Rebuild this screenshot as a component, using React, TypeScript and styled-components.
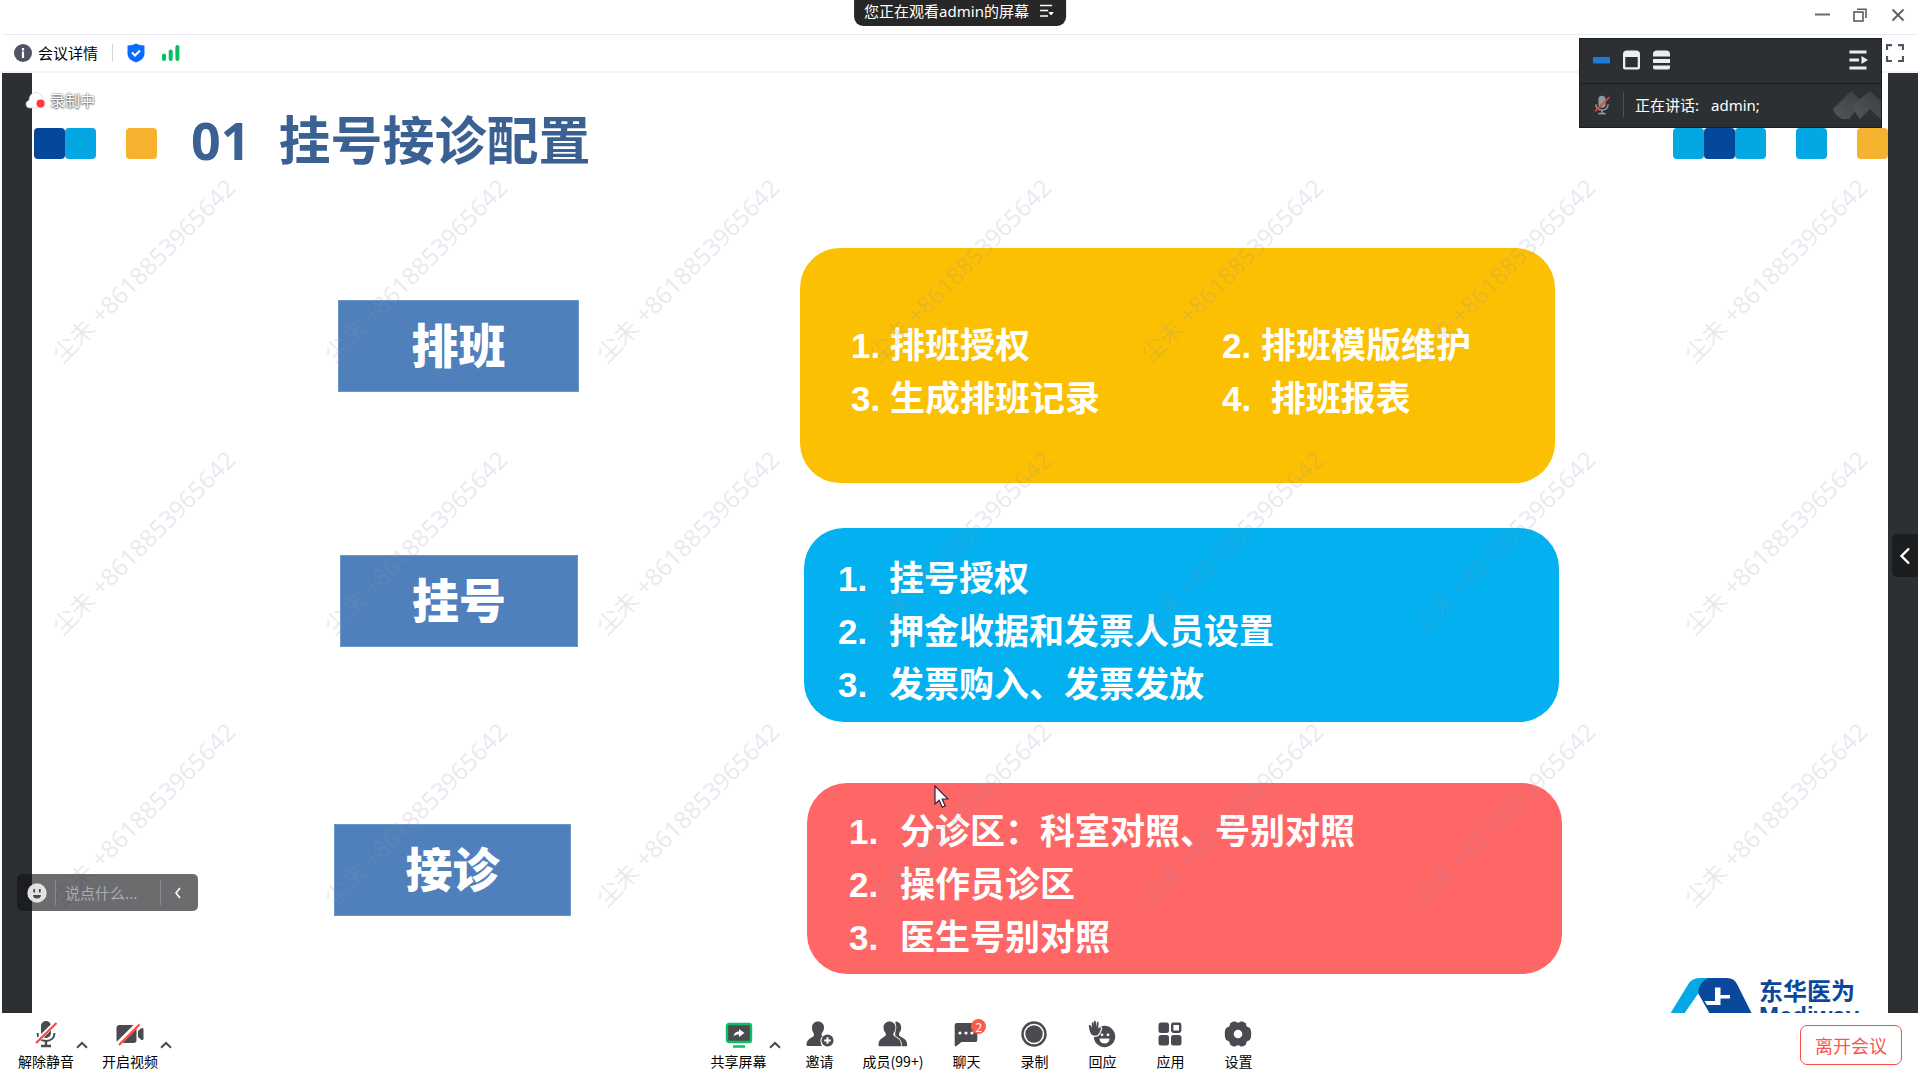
import React from "react";
import styled, { createGlobalStyle, css } from "styled-components";

const uiFont = `"Noto Sans", "Noto Sans CJK SC", sans-serif`;
const cjkFont = `"Noto Sans CJK SC", "Noto Sans", sans-serif`;

const GlobalStyle = createGlobalStyle`
  * { box-sizing: border-box; }
  body { margin: 0; background: #fff; font-family: ${uiFont}; }
  button, input { font: inherit; color: inherit; border: 0; background: none; padding: 0; margin: 0; }
  button { cursor: pointer; }
  h1, p, ol { margin: 0; padding: 0; }
  ol { list-style: none; }
  svg { display: block; flex: none; }
`;

const Window = styled.main`
  position: relative;
  display: flex;
  flex-direction: column;
  height: 100vh;
  padding: 0 2px;
  overflow: hidden;
  background: #fff;
`;

const TitleBar = styled.header`
  display: flex;
  align-items: center;
  justify-content: flex-end;
  gap: 24px;
  height: 35px;
  padding: 0 13px 5px;
  border-bottom: 1px solid #e9eaf4;
`;

const WindowButton = styled.button`
  display: flex;
  align-items: center;
  justify-content: center;
  width: 14px;
  height: 20px;
`;

const SharePill = styled.button`
  position: absolute;
  top: 0;
  left: 50%;
  transform: translateX(-50%);
  display: flex;
  align-items: center;
  gap: 10px;
  height: 26px;
  padding: 0 12px 4px 10px;
  border-radius: 0 0 9px 9px;
  background: #272727;
  color: #fff;
  font-size: 15px;
  line-height: 18px;
  white-space: nowrap;
`;

const InfoBar = styled.div`
  display: flex;
  align-items: center;
  height: 38px;
  padding: 0 16px 1px 12px;
  border-bottom: 2px solid #f1f2fa;
`;

const DetailsButton = styled.button`
  display: flex;
  align-items: center;
  gap: 6px;
  font-family: ${cjkFont};
  font-size: 15px;
  line-height: 20px;
  color: #000;
`;

const Rule = styled.span<{ $color: string; $height: number }>`
  flex: none;
  width: 1px;
  height: ${(p) => p.$height}px;
  background: ${(p) => p.$color};
`;

const StatusIcons = styled.div`
  display: flex;
  align-items: center;
  gap: 17px;
`;

const InfoLeft = styled.div`
  display: flex;
  align-items: center;
  flex: 1;
  gap: 14px;
`;

const Stage = styled.section`
  position: relative;
  flex: 1;
  min-height: 0;
  display: flex;
  padding: 0 30px;
  overflow: hidden;
  background: #2c3033;
`;

const Slide = styled.article`
  position: relative;
  flex: 1;
  display: flex;
  flex-direction: column;
  overflow: hidden;
  background: #fff;
`;

const SlideHeader = styled.div`
  display: flex;
  align-items: center;
  height: 141px;
  padding-left: 2px;
`;

const Blocks = styled.div`
  display: flex;
`;

const Block = styled.span<{ $color: string; $gap?: boolean }>`
  width: 31px;
  height: 31px;
  margin-left: ${(p) => (p.$gap ? 30 : 0)}px;
  border-radius: 4px;
  background: ${(p) => p.$color};
`;

const SlideTitle = styled.h1`
  display: flex;
  flex: 1;
  gap: 28px;
  padding: 0 0 8px 34px;
  font-family: ${uiFont};
  font-size: 52px;
  line-height: 60px;
  font-weight: 700;
  color: #3b6193;
`;

const Rows = styled.div`
  display: flex;
  flex-direction: column;
  padding-top: 34px;
`;

const Row = styled.div<{ $indent: number; $gap: number; $after: number }>`
  display: flex;
  align-items: flex-start;
  gap: ${(p) => p.$gap}px;
  padding-left: ${(p) => p.$indent}px;
  margin-bottom: ${(p) => p.$after}px;
`;

const LabelBox = styled.div<{ $width: number; $top: number }>`
  display: flex;
  align-items: center;
  justify-content: center;
  width: ${(p) => p.$width}px;
  height: 92px;
  margin-top: ${(p) => p.$top}px;
  padding-bottom: 6px;
  border: 1px solid #6b97c6;
  background: #5080bc;
  color: #fff;
  font-family: ${cjkFont};
  font-size: 47px;
  line-height: 64px;
  font-weight: 900;
`;

const Card = styled.div<{ $color: string; $height: number; $inset: number }>`
  display: flex;
  align-items: center;
  width: 755px;
  height: ${(p) => p.$height}px;
  padding: 12px 80px 0 ${(p) => p.$inset}px;
  border-radius: 40px;
  background: ${(p) => p.$color};
  color: #fff;
  font-family: "Liberation Sans", "Noto Sans CJK SC", sans-serif;
  font-size: 35px;
  line-height: 53px;
  font-weight: 700;
`;

const PairList = styled.ol`
  display: grid;
  grid-template-columns: 371px auto;
  & > li { white-space: pre; }
`;

const NumberedList = styled.ol`
  & > li { display: flex; }
`;

const ItemNumber = styled.span`
  width: 51px;
`;

const BrandLogo = styled.div`
  position: absolute;
  right: 29px;
  top: 903px;
  display: flex;
  gap: 7px;
  color: #0b479a;
`;

const BrandName = styled.div`
  font-family: ${cjkFont};
  font-size: 24px;
  line-height: 28px;
  font-weight: 700;
`;

const BrandLatin = styled.div`
  font-family: "Liberation Sans", sans-serif;
  font-size: 24px;
  line-height: 24px;
  font-weight: 700;
`;

const Watermarks = styled.div`
  position: absolute;
  top: 60px;
  left: 4px;
  width: 1904px;
  display: grid;
  grid-template-columns: repeat(7, 272px);
  grid-auto-rows: 272px;
  pointer-events: none;
`;

const Watermark = styled.span`
  display: flex;
  align-items: center;
  justify-content: center;
  transform: rotate(-45deg);
  white-space: nowrap;
  font-size: 24px;
  font-weight: 400;
  color: rgba(140, 148, 172, 0.2);
`;

const Recording = styled.div`
  position: absolute;
  top: 17px;
  left: 23px;
  display: flex;
  align-items: center;
  gap: 4px;
  height: 20px;
  color: #fff;
  font-family: ${cjkFont};
  font-size: 15px;
  line-height: 20px;
  text-shadow: 0 0 2px #444, 0 1px 2px #666;
`;

const ChatBar = styled.form`
  position: absolute;
  left: 15px;
  bottom: 102px;
  display: flex;
  align-items: center;
  width: 181px;
  height: 37px;
  padding-left: 10px;
  border-radius: 5px;
  background: rgba(18, 18, 22, 0.62);
  color: #fff;
`;

const EmojiButton = styled.button`
  margin-right: 8px;
`;

const ChatInput = styled.input`
  flex: 1;
  min-width: 0;
  padding-left: 9px;
  font-family: ${cjkFont};
  font-size: 15px;
  line-height: 20px;
  outline: 0;
  &::placeholder { color: #a9acb8; opacity: 1; }
`;

const CollapseButton = styled.button`
  display: flex;
  align-items: center;
  width: 37px;
  height: 37px;
  padding-left: 13px;
`;

const SideHandle = styled.button`
  position: absolute;
  right: 0;
  top: 461px;
  display: flex;
  align-items: center;
  justify-content: center;
  width: 26px;
  height: 43px;
  border-radius: 5px 0 0 5px;
  background: #1b1d1f;
`;

const Pointer = styled.svg`
  position: absolute;
  left: 931px;
  top: 712px;
`;

const SpeakerPanel = styled.aside`
  position: absolute;
  top: 38px;
  right: 38px;
  width: 303px;
  height: 90px;
  border: 1px solid #1c1f21;
  background: #2c3033;
  color: #fff;
  font-size: 15px;
  line-height: 20px;
`;

const PanelTop = styled.div`
  display: flex;
  align-items: center;
  gap: 13px;
  height: 45px;
  padding: 0 13px 2px;
  border-bottom: 1px solid #1c1f21;
  & > :last-child { margin-left: auto; }
`;

const PanelBottom = styled.div`
  display: flex;
  align-items: center;
  gap: 11px;
  height: 43px;
  padding: 0 0 2px 12px;
`;

const Speaking = styled.p`
  display: flex;
  flex: 1;
  gap: 12px;
`;

const BottomBar = styled.footer`
  display: flex;
  justify-content: space-between;
  height: 67px;
  padding: 0 16px 0 10px;
`;

const ToolGroup = styled.div`
  display: flex;
  gap: 6px;
`;

const toolText = css`
  font-family: ${cjkFont};
  font-size: 14px;
  line-height: 20px;
`;

const Tool = styled.button<{ $tight?: boolean }>`
  position: relative;
  display: flex;
  flex-direction: column;
  align-items: center;
  min-width: 62px;
  padding: ${(p) => (p.$tight ? "7px 2px 0 6px" : "7px 6px 0")};
  ${toolText}
  color: #000;
  & > svg { margin-bottom: 3px; }
`;

const Caret = styled.button`
  align-self: flex-start;
  width: 14px;
  padding-top: 28px;
`;

const Split = styled.div`
  display: flex;
`;

const Badge = styled.span`
  position: absolute;
  top: 6px;
  right: 11px;
  width: 15px;
  height: 15px;
  border-radius: 50%;
  background: #fc5b4b;
  color: #fff;
  font-size: 12px;
  line-height: 15px;
  text-align: center;
`;

const LeaveButton = styled.button`
  align-self: flex-start;
  width: 102px;
  height: 40px;
  margin-top: 12px;
  border: 1px solid #fa4b45;
  border-radius: 7px;
  color: #fa5751;
  font-family: ${cjkFont};
  font-size: 18px;
  line-height: 24px;
`;

const INK = "#494b50";

const CaretIcon = () => (
  <svg width="12" height="8" viewBox="0 0 12 8" fill="none" stroke={INK} strokeWidth="2">
    <path d="M1 6.8 6 2l5 4.8" />
  </svg>
);

const MicMuted = ({ body = INK, slash = "#fa4640", size = 28 }) => (
  <svg width={size} height={size} viewBox="0 0 28 28" fill="none">
    <rect x="9" y="1" width="10" height="17" rx="5" fill={body} />
    <path d="M5.5 13c0 5 3.500 8 8.500 8s8.500-3 8.500-8" stroke={body} strokeWidth="2" />
    <path d="M14 21v4M9 26h10" stroke={body} strokeWidth="2.400" />
    <path d="M3.500 22.500 24 2.500" stroke="#fff" strokeOpacity={body === INK ? 1 : 0} strokeWidth="4.500" />
    <path d="M4 23 24.500 3" stroke={slash} strokeWidth="2.200" />
  </svg>
);

const CameraOff = () => (
  <svg width="28" height="28" viewBox="0 0 28 28" fill="none">
    <rect x="0.500" y="5" width="20" height="18" rx="3" fill={INK} />
    <path d="M22 11l3-2.500c1.500-1 2.500-.5 2.500 1v9c0 1.500-1 2-2.500 1L22 17z" fill={INK} />
    <path d="M2 24 22.500 3.500" stroke="#fff" strokeWidth="5" />
    <path d="M3 25 23.500 4.500" stroke="#fa4640" strokeWidth="2.200" />
  </svg>
);

const ShareScreen = () => (
  <svg width="28" height="28" viewBox="0 0 28 28">
    <rect x="2" y="4" width="24" height="18" rx="2" fill={INK} stroke="#0cbf66" strokeWidth="2.400" />
    <path d="M8.500 16.500c.5-3.500 2.500-5 5.500-5V9l5.500 4-5.500 4v-2.500c-2.500 0-4 .5-5.500 2z" fill="#fff" />
    <path d="M8 26.500h12" stroke="#0cbf66" strokeWidth="2.500" />
  </svg>
);

const Invite = () => (
  <svg width="28" height="28" viewBox="0 0 28 28">
    <path d="M12 1.500c3.500 0 6 2.500 6 6 0 2.500-1 4-2 5.500-.8 1.200-.5 2.500.5 3-1.500 1.500-2 3-2 5 0 1.800.5 3.500 1.500 5H1.500c-.8 0-1-.5-1-1.200C.500 20 4 18.500 6.500 17c1.500-.8 2-2.500 1-4C6.500 11.500 6 10 6 7.500c0-3.500 2.500-6 6-6z" fill={INK} />
    <circle cx="21.500" cy="20.500" r="6" fill={INK} />
    <path d="M21.500 17.200v6.600M18.200 20.500h6.600" stroke="#fff" strokeWidth="2" />
  </svg>
);

const Members = () => (
  <svg width="30" height="28" viewBox="0 0 30 28" fill={INK}>
    <path d="M17.500 1.500c3.300 0 5.700 2.500 5.700 6 0 2.500-1 4-1.800 5.500-.8 1.500-.4 2.800 1 3.500 3.500 1.800 6.800 3.500 6.800 8.500 0 .8-.2 1.200-1 1.200H17z" />
    <path d="M11.500 1.500c3.500 0 6 2.500 6 6 0 2.500-1 4-1.800 5.500-.8 1.500-.4 2.800 1 3.500 3.500 1.800 6.300 3.500 6.300 8.500 0 .8-.2 1.200-1 1.200H1.500c-.8 0-1-.4-1-1.200 0-5 3-6.700 6-8.500 1.400-.8 1.900-2 1-3.500-1-1.500-2-3-2-5.500 0-3.500 2.500-6 6-6z" stroke="#fff" strokeWidth="1.600" paintOrder="stroke" />
  </svg>
);

const Chat = () => (
  <svg width="24" height="28" viewBox="0 0 24 28">
    <path d="M3 3h18c1.500 0 2.300.8 2.300 2.300v14.400c0 1.500-.8 2.300-2.300 2.300H7.500l-5 4c-1 .7-1.800.4-1.800-.8V5.300C.7 3.800 1.500 3 3 3z" fill={INK} />
    <circle cx="6" cy="13" r="1.600" fill="#fff" />
    <circle cx="12" cy="13" r="1.600" fill="#fff" />
    <circle cx="18" cy="13" r="1.600" fill="#fff" />
  </svg>
);

const Record = () => (
  <svg width="28" height="28" viewBox="0 0 28 28">
    <circle cx="14" cy="14" r="11.500" fill="none" stroke={INK} strokeWidth="2.400" />
    <circle cx="14" cy="14" r="8.700" fill={INK} />
  </svg>
);

const Reaction = () => (
  <svg width="28" height="28" viewBox="0 0 28 28">
    <circle cx="16.500" cy="16.500" r="10.700" fill={INK} />
    <path d="M.8 5.500C1.500 4.600 2.600 5 3 6l.8 2V3c0-1.100 1.700-1.100 1.800 0l.3 4V1.600c0-1.200 1.800-1.200 1.900 0L8.200 7l.7-4.500c.2-1.100 1.800-.8 1.700.3l-.4 6 1-1.100c.8-.8 2-.2 1.700.8-.8 4-2.400 7.200-5.900 7.200-3.600 0-4.800-2.700-5.600-6.200z" fill={INK} stroke="#fff" strokeWidth="2.400" paintOrder="stroke" />
    <circle cx="14" cy="14.800" r="1.400" fill="#fff" />
    <circle cx="20" cy="14.800" r="1.400" fill="#fff" />
    <path d="M11.500 18.500h10c0 3.300-2 5-5 5s-5-1.700-5-5z" fill="#fff" />
  </svg>
);

const Apps = () => (
  <svg width="24" height="28" viewBox="0 0 24 28" fill={INK}>
    <rect x="0.500" y="2.500" width="10.500" height="10.500" rx="2.500" />
    <rect x="0.500" y="15" width="10.500" height="10.500" rx="2.500" />
    <rect x="13" y="15" width="10.500" height="10.500" rx="2.500" />
    <rect x="14.200" y="3.700" width="8" height="8" rx="1.200" fill="none" stroke={INK} strokeWidth="2.400" />
  </svg>
);

const Settings = () => (
  <svg width="28" height="28" viewBox="0 0 28 28">
    <path d="M9.500 1.500h2c1.200 1.500 3.800 1.500 5 0h2c1.700.6 2.700 1.300 3.600 2.300-.2 2 .8 3.400 2.900 3.800 1.500.5 2.200 3 2.200 6.400s-.7 5.900-2.200 6.400c-2.100.4-3.100 1.800-2.900 3.800-.9 1-1.900 1.700-3.600 2.300h-2c-1.200-1.500-3.800-1.500-5 0h-2c-1.700-.6-2.700-1.300-3.600-2.300.2-2-.8-3.400-2.900-3.800C1.500 19.900.8 17.400.8 14s.7-5.900 2.200-6.400c2.100-.4 3.100-1.800 2.900-3.800.9-1 1.900-1.700 3.600-2.300z" fill={INK} />
    <circle cx="14" cy="14" r="4.300" fill="#fff" />
  </svg>
);

const BrandMark = () => (
  <svg width="82" height="38" viewBox="0 -2 82 38">
    <path d="M0 36 19 5Q23 0 30 0h9Q30 4 28.500 15L14 36z" fill="#06a9e4" />
    <path d="M38 0h19q7 0 10 6l15 30H40L28 15Q29 4 38 0z" fill="#0b479a" />
    <path d="M45 9.500h5.500V17H60v3.500h-9.500V27H37l-2.500-4H45z" fill="#fff" />
    <path d="M38 36h12l-4-6z" fill="#0b479a" />
  </svg>
);

interface PlainTool {
  label: string;
  icon: React.ReactNode;
  badge?: number;
}

const plainTools: PlainTool[] = [
  { label: "邀请", icon: <Invite /> },
  { label: "成员(99+)", icon: <Members /> },
  { label: "聊天", icon: <Chat />, badge: 2 },
  { label: "录制", icon: <Record /> },
  { label: "回应", icon: <Reaction /> },
  { label: "应用", icon: <Apps /> },
  { label: "设置", icon: <Settings /> },
];

const SplitTool = ({ label, icon }: { label: string; icon: React.ReactNode }) => (
  <Split>
    <Tool type="button" $tight>
      {icon}
      {label}
    </Tool>
    <Caret type="button" aria-label={`${label}选项`}>
      <CaretIcon />
    </Caret>
  </Split>
);

const Numbered = ({ items }: { items: string[] }) => (
  <NumberedList>
    {items.map((text, i) => (
      <li key={text}>
        <ItemNumber>{i + 1}.</ItemNumber>
        <span>{text}</span>
      </li>
    ))}
  </NumberedList>
);

const NAVY = "#04479b";
const SKY = "#03a7e1";
const AMBER = "#f4b22f";

export default function App() {
  return (
    <Window>
      <GlobalStyle />
      <TitleBar>
        <WindowButton type="button" aria-label="最小化">
          <svg width="15" height="15" viewBox="0 0 15 15"><path d="M0 7.500h15" stroke="#6a6b70" strokeWidth="2" /></svg>
        </WindowButton>
        <WindowButton type="button" aria-label="还原">
          <svg width="14" height="14" viewBox="0 0 14 14" fill="none" stroke="#5c5e63" strokeWidth="1.600">
            <rect x="1" y="4" width="9" height="9" />
            <path d="M4 1.200h9V10" />
          </svg>
        </WindowButton>
        <WindowButton type="button" aria-label="关闭">
          <svg width="14" height="14" viewBox="0 0 14 14" stroke="#5c5e63" strokeWidth="1.800"><path d="m1.500 1.500 11 11M12.500 1.500l-11 11" /></svg>
        </WindowButton>
      </TitleBar>
      <SharePill type="button">
        您正在观看admin的屏幕
        <svg width="15" height="14" viewBox="0 0 15 14" stroke="#fff" strokeWidth="1.500">
          <path d="M1 1.500h12M1 6.500h8M1 12h8" />
          <path d="m10 8.500 2 2.500 2-2.500z" fill="#fff" strokeWidth="1" />
        </svg>
      </SharePill>

      <InfoBar>
        <InfoLeft>
          <DetailsButton type="button">
            <svg width="18" height="18" viewBox="0 0 18 18">
              <circle cx="9" cy="9" r="9" fill="#4f5462" />
              <path d="M9 4v2.500M9 7.500V14" stroke="#fff" strokeWidth="2.200" />
            </svg>
            会议详情
          </DetailsButton>
          <Rule $color="#d3d5dc" $height={18} />
          <StatusIcons>
            <svg width="18" height="20" viewBox="0 0 18 20">
              <path d="M9 .5c2 1.300 5 2 8.500 2v8c0 4.500-4 7.500-8.500 9-4.500-1.500-8.500-4.500-8.500-9v-8C4 2.500 7 1.800 9 .5z" fill="#0a6cff" />
              <path d="m5 9.500 3 3 5-5" fill="none" stroke="#fff" strokeWidth="2" />
            </svg>
            <svg width="18" height="16" viewBox="0 0 18 16" stroke="#07c160" strokeWidth="4" strokeLinecap="round">
              <path d="M2 10.500v3.500M8.700 6.500v7.500M15.400 2v12" />
            </svg>
          </StatusIcons>
        </InfoLeft>
        <WindowButton type="button" aria-label="全屏">
          <svg width="18" height="18" viewBox="0 0 18 18" fill="none" stroke="#4f5462" strokeWidth="2.200">
            <path d="M1 6V1.200h5M12 1.200h5V6M17 12v5h-5M6 17H1v-5" />
          </svg>
        </WindowButton>
      </InfoBar>

      <Stage>
        <Slide>
          <SlideHeader>
            <Blocks>
              <Block $color={NAVY} />
              <Block $color={SKY} />
              <Block $color={AMBER} $gap />
            </Blocks>
            <SlideTitle>
              <span>01</span>
              <span>挂号接诊配置</span>
            </SlideTitle>
            <Blocks>
              <Block $color={SKY} />
              <Block $color={NAVY} />
              <Block $color={SKY} />
              <Block $color={SKY} $gap />
              <Block $color={AMBER} $gap />
            </Blocks>
          </SlideHeader>
          <Rows>
            <Row $indent={306} $gap={221} $after={45}>
              <LabelBox $width={241} $top={52}>排班</LabelBox>
              <Card $color="#fcc003" $height={235} $inset={51}>
                <PairList>
                  <li>1. 排班授权</li>
                  <li>2. 排班模版维护</li>
                  <li>3. 生成排班记录</li>
                  <li>4.  排班报表</li>
                </PairList>
              </Card>
            </Row>
            <Row $indent={308} $gap={226} $after={61}>
              <LabelBox $width={238} $top={27}>挂号</LabelBox>
              <Card $color="#03b0f0" $height={194} $inset={34}>
                <Numbered items={["挂号授权", "押金收据和发票人员设置", "发票购入、发票发放"]} />
              </Card>
            </Row>
            <Row $indent={302} $gap={236} $after={0}>
              <LabelBox $width={237} $top={41}>接诊</LabelBox>
              <Card $color="#ff6666" $height={191} $inset={42}>
                <Numbered items={["分诊区：科室对照、号别对照", "操作员诊区", "医生号别对照"]} />
              </Card>
            </Row>
          </Rows>
          <BrandLogo>
            <BrandMark />
            <div>
              <BrandName>东华医为</BrandName>
              <BrandLatin>Mediway</BrandLatin>
            </div>
          </BrandLogo>
        </Slide>

        <Watermarks>
          {Array.from({ length: 21 }, (_, i) => (
            <Watermark key={i}>尘未 +8618853965642</Watermark>
          ))}
        </Watermarks>

        <Recording>
          <svg width="21" height="18" viewBox="0 0 21 18">
            <path d="M5 17C2.500 17 1 15.300 1 13.200c0-2 1.200-3.300 3-3.600C4.200 5 6.500 1.500 11 1.500c3.800 0 6 2.500 6.300 6 1.700.8 2.700 2.300 2.700 4.500 0 3-2 5-4.500 5z" fill="#fff" stroke="#c9cacc" strokeWidth=".6" />
            <circle cx="15.500" cy="12.500" r="4" fill="#fc3b36" />
          </svg>
          录制中
        </Recording>

        <ChatBar onSubmit={(e) => e.preventDefault()}>
          <EmojiButton type="button" aria-label="表情">
            <svg width="20" height="20" viewBox="0 0 20 20">
              <circle cx="10" cy="10" r="9.700" fill="#e2e2e3" />
              <path d="M7.200 6v3.500M12.800 6v3.500" stroke="#4b4c4f" strokeWidth="1.800" />
              <path d="M6 12h8c0 2.500-1.700 3.500-4 3.500S6 14.500 6 12z" fill="#4b4c4f" />
            </svg>
          </EmojiButton>
          <Rule $color="#8b8c90" $height={25} />
          <ChatInput aria-label="聊天消息" placeholder="说点什么..." />
          <Rule $color="#8b8c90" $height={25} />
          <CollapseButton type="button" aria-label="收起">
            <svg width="8" height="12" viewBox="0 0 8 12" fill="none" stroke="#fff" strokeWidth="1.600"><path d="M6 1 2 6l4 5" /></svg>
          </CollapseButton>
        </ChatBar>

        <SideHandle type="button" aria-label="展开侧栏">
          <svg width="12" height="18" viewBox="0 0 12 18" fill="none" stroke="#fff" strokeWidth="2.400"><path d="M10 1.500 2.500 9l7.500 7.500" /></svg>
        </SideHandle>

        <Pointer width="16" height="24" viewBox="0 0 16 24">
          <path d="M2 1v18l4.200-3.800 3 7 3-1.300-3-6.900H15z" fill="#fff" stroke="#26283a" strokeWidth="1.200" />
        </Pointer>
      </Stage>

      <SpeakerPanel>
        <PanelTop>
          <button type="button" aria-label="收起视频">
            <svg width="17" height="20" viewBox="0 0 17 20"><rect y="7" width="17" height="6.500" rx="1" fill="#2079dc" /></svg>
          </button>
          <button type="button" aria-label="单个视频">
            <svg width="17" height="20" viewBox="0 0 17 20">
              <path d="M3.500.5h10c2 0 3.500 1.500 3.500 3.500v13.500c0 1.200-.8 2-2 2H2c-1.200 0-2-.8-2-2V4C0 2 1.500.5 3.500.5zM2.300 7v10.200h12.400V7z" fill="#ededed" fillRule="evenodd" />
            </svg>
          </button>
          <button type="button" aria-label="视频列表">
            <svg width="17" height="20" viewBox="0 0 17 20" fill="#ededed">
              <path d="M3.500.5h10C15.500.5 17 2 17 4v2.500H0V4C0 2 1.500.5 3.500.5z" />
              <rect y="9" width="17" height="4" />
              <path d="M0 15.500h17v2c0 1.200-.8 2-2 2H2c-1.200 0-2-.8-2-2z" />
            </svg>
          </button>
          <button type="button" aria-label="展开">
            <svg width="20" height="20" viewBox="0 0 20 20" stroke="#ededed" strokeWidth="3">
              <path d="M1.500 2h17M1.500 10H11M1.500 18h17" />
              <path d="m13.500 6 6.500 4-6.500 4z" fill="#ededed" stroke="none" />
            </svg>
          </button>
        </PanelTop>
        <PanelBottom>
          <MicMuted body="#94979a" slash="#e0463f" size={20} />
          <Rule $color="#4d5154" $height={25} />
          <Speaking>
            <span>正在讲话:</span>
            <span>admin;</span>
          </Speaking>
          <svg width="48" height="28" viewBox="0 0 48 28">
            <defs>
              <linearGradient id="peak" x1="1" y1="0" x2="0" y2="1">
                <stop offset="0" stopColor="#3a3d40" />
                <stop offset="1" stopColor="#54575a" />
              </linearGradient>
            </defs>
            <path d="M0 18 18 0l12 11-14 17H9C4 25 1 22 0 18z" fill="url(#peak)" />
            <path d="M18 15 37 0l11 10v18L37 18 27 28z" fill="url(#peak)" />
          </svg>
        </PanelBottom>
      </SpeakerPanel>

      <BottomBar>
        <ToolGroup>
          <SplitTool label="解除静音" icon={<MicMuted />} />
          <SplitTool label="开启视频" icon={<CameraOff />} />
        </ToolGroup>
        <ToolGroup>
          <SplitTool label="共享屏幕" icon={<ShareScreen />} />
          {plainTools.map((t) => (
            <Tool key={t.label} type="button">
              {t.icon}
              {t.label}
              {t.badge && <Badge>{t.badge}</Badge>}
            </Tool>
          ))}
        </ToolGroup>
        <LeaveButton type="button">离开会议</LeaveButton>
      </BottomBar>
    </Window>
  );
}
